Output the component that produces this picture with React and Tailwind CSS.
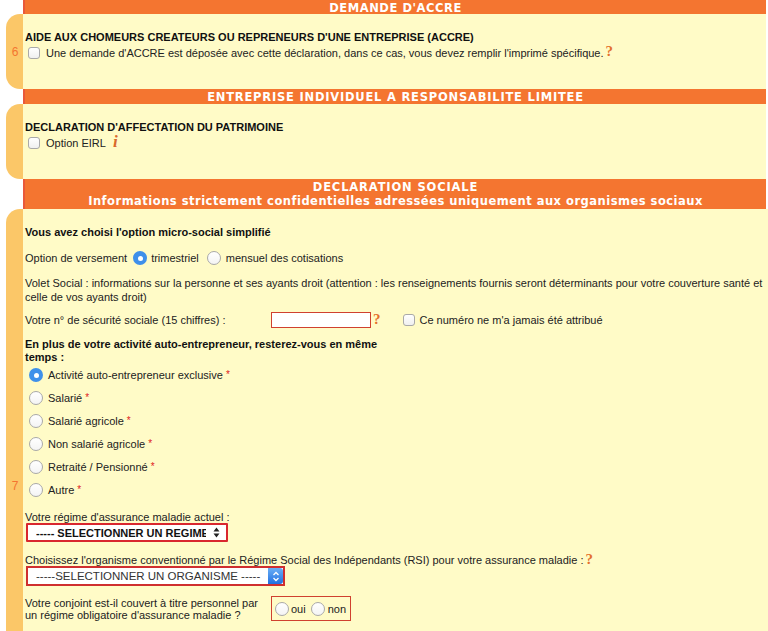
const font = { fontFamily: '"Liberation Sans", Arial, sans-serif' };

function Header({ children }) {
  return (
    <div className="ml-[23px] w-[743px] bg-[#f47530] border-l-2 border-[#e9593a] pt-[1px] text-center text-white font-bold text-[11.5px] leading-[14px] [font-family:'DejaVu_Sans',sans-serif]">
      {children}
    </div>
  );
}

function Section({ num, h, children }) {
  return (
    <div className="flex ml-[6px] w-[760px]" style={{ minHeight: h }}>
      <div className="w-[17px] shrink-0 bg-[#fbc768] rounded-l-[14px] flex items-center justify-center pl-[1px] text-[12px] text-[#f47530]">
        {num}
      </div>
      <div className="flex-1 bg-[#fffbc7] pl-[2px]">{children}</div>
    </div>
  );
}

function Check() {
  return <span className="inline-block w-[12px] h-[12px] shrink-0 rounded-[3px] border border-[#a9a9a9] bg-gradient-to-b from-white to-[#f0f0f0]" />;
}

function Radio({ on }) {
  return on ? (
    <span className="inline-flex items-center justify-center w-[14px] h-[14px] shrink-0 rounded-full bg-[#3f90ea]">
      <span className="w-[5px] h-[5px] rounded-full bg-white" />
    </span>
  ) : (
    <span className="inline-block w-[14px] h-[14px] shrink-0 rounded-full border border-[#a9a9a9] bg-gradient-to-b from-white to-[#f4f4f4]" />
  );
}

function Q({ className = "" }) {
  return <span className={"font-bold text-[#e4702c] text-[15px] leading-[14px] [font-family:'Liberation_Serif',serif] " + className}>?</span>;
}

const Star = () => <span className="text-[#e02020] text-[10px] ml-[3px]">*</span>;

const options = [
  ["Activité auto-entrepreneur exclusive", true],
  ["Salarié", false],
  ["Salarié agricole", false],
  ["Non salarié agricole", false],
  ["Retraité / Pensionné", false],
  ["Autre", false],
];

export default function App() {
  return (
    <div className="h-[631px] overflow-hidden bg-white text-[11px] leading-[14px] text-[#222]" style={font}>
      <div className="h-[14px] overflow-hidden">
        <Header><span className="tracking-[0.55px]">DEMANDE D'ACCRE</span></Header>
      </div>
      <Section num="6" h={75}>
        <div className="pt-[16px] font-bold text-[#111]">AIDE AUX CHOMEURS CREATEURS OU REPRENEURS D'UNE ENTREPRISE (ACCRE)</div>
        <div className="flex items-center mt-[1px] pl-[3px] h-[15px]">
          <Check />
          <span className="ml-[6px]">Une demande d'ACCRE est déposée avec cette déclaration, dans ce cas, vous devez remplir l'imprimé spécifique.</span>
          <Q className="ml-[2px] -mt-[3px]" />
        </div>
      </Section>
      <Header><span className="tracking-[0.78px]">ENTREPRISE INDIVIDUEL A RESPONSABILITE LIMITEE</span></Header>
      <Section h={75}>
        <div className="pt-[16px] font-bold text-[#111]">DECLARATION D'AFFECTATION DU PATRIMOINE</div>
        <div className="flex items-center mt-[1px] pl-[3px] h-[15px]">
          <Check />
          <span className="ml-[6px]">Option EIRL</span>
          <span className="ml-[7px] -mt-[1px] font-bold italic text-[#d9692c] text-[17px] leading-[14px] [font-family:'Liberation_Serif',serif]">i</span>
        </div>
      </Section>
      <Header>
        <span className="block tracking-[0.85px]">DECLARATION SOCIALE</span>
        <span className="block leading-[15px] tracking-[0.49px]">Informations strictement confidentielles adressées uniquement aux organismes sociaux</span>
      </Header>
      <Section num="7" h={554}>
        <div className="pt-[16px] font-bold text-[#111]">Vous avez choisi l'option micro-social simplifié</div>
        <div className="flex items-center mt-[12px] h-[14px]">
          <span>Option de versement</span>
          <span className="ml-[6px] flex"><Radio on /></span>
          <span className="ml-[4px]">trimestriel</span>
          <span className="ml-[8px] flex"><Radio /></span>
          <span className="ml-[5px]">mensuel des cotisations</span>
        </div>
        <div className="mt-[11px] w-[745px]">
          Volet Social : informations sur la personne et ses ayants droit (attention : les renseignements fournis seront déterminants pour votre couverture santé et celle de vos ayants droit)
        </div>
        <div className="flex items-center mt-[8px] h-[16px]">
          <span className="w-[246px]">Votre n° de sécurité sociale (15 chiffres) :</span>
          <span className="w-[100px] h-[16px] bg-white border border-[#d0412f]" />
          <Q className="ml-[2px] -mt-[3px]" />
          <span className="ml-[22px] flex"><Check /></span>
          <span className="ml-[5px]">Ce numéro ne m'a jamais été attribué</span>
        </div>
        <div className="mt-[10px] w-[370px] font-bold text-[#111] leading-[13px]">En plus de votre activité auto-entrepreneur, resterez-vous en même temps :</div>
        <div className="mt-[4px] pl-[4px] flex flex-col gap-[9px]">
          {options.map(([label, on]) => (
            <div key={label} className="flex items-center h-[14px]">
              <Radio on={on} />
              <span className="ml-[5px]">{label}</span>
              <Star />
            </div>
          ))}
        </div>
        <div className="mt-[13px]">Votre régime d'assurance maladie actuel :</div>
        <div className="mt-[-1px] ml-[1px] w-[202px] h-[19px] border-[2px] border-[#d9272e] bg-white rounded-[1px] flex items-center pl-[8px] pr-[6px]">
          <span className="font-bold text-[#111] w-[171px] overflow-hidden whitespace-nowrap">----- SELECTIONNER UN REGIME</span>
          <svg width="7" height="11" viewBox="0 0 7 11" className="ml-[7px]">
            <path d="M3.5 0.5 6.5 4.5H.5zM3.5 10.5 .5 6.5H6.5z" fill="#222" />
          </svg>
        </div>
        <div className="mt-[11px] flex items-center">
          <span>Choisissez l'organisme conventionné par le Régime Social des Indépendants (RSI) pour votre assurance maladie :</span>
          <Q className="ml-[2px] -mt-[3px]" />
        </div>
        <div className="mt-[-1px] ml-[1px] w-[259px] h-[20px] border-[2px] border-[#cf2f2f] bg-white flex items-center pl-[8px]">
          <span className="flex-1 text-[11.5px] text-[#333] whitespace-nowrap overflow-hidden">-----SELECTIONNER UN ORGANISME -----</span>
          <span className="w-[15px] h-[16px] rounded-r-[3px] bg-gradient-to-b from-[#6aaef5] to-[#1f6fe0] flex items-center justify-center">
            <svg width="8" height="11" viewBox="0 0 8 11" fill="none" stroke="white" strokeWidth="1.3">
              <path d="M1.5 4 4 1.5 6.5 4M1.5 7 4 9.5 6.5 7" />
            </svg>
          </span>
        </div>
        <div className="mt-[10px] flex items-center">
          <span className="w-[246px] leading-[12px] pr-[10px]">Votre conjoint est-il couvert à titre personnel par un régime obligatoire d'assurance maladie ?</span>
          <span className="w-[80px] h-[25px] border border-[#d0412f] flex items-center pl-[3px]">
            <Radio />
            <span className="ml-[2px]">oui</span>
            <span className="ml-[5px] flex"><Radio /></span>
            <span className="ml-[3px]">non</span>
          </span>
        </div>
      </Section>
    </div>
  );
}
